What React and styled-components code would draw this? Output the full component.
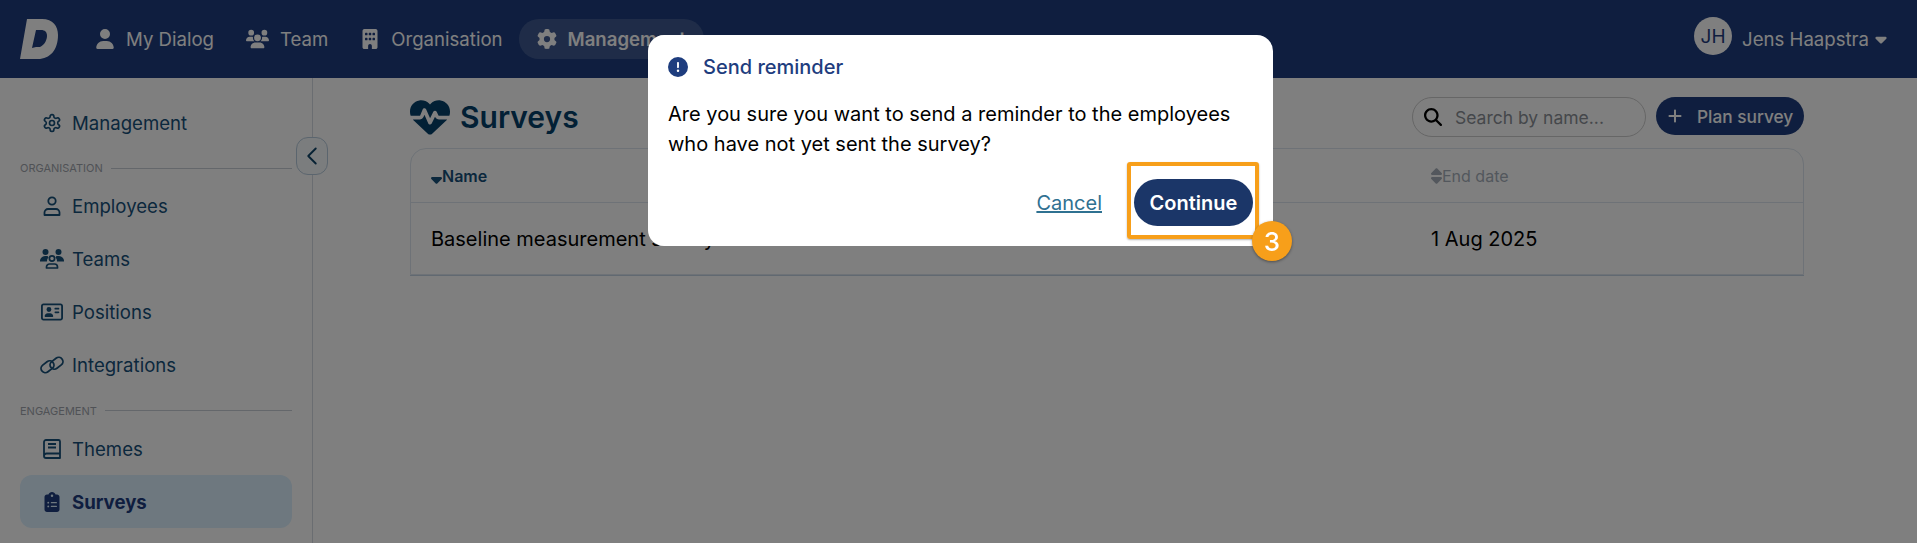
import React from 'react'
import styled, { createGlobalStyle } from 'styled-components'
import {
  FaUser,
  FaUsers,
  FaBuilding,
  FaGear,
  FaRegAddressCard,
  FaClipboardList,
  FaMagnifyingGlass,
  FaCircleExclamation,
  FaCaretDown,
  FaSortDown,
  FaSort,
  FaPlus,
  FaHeartPulse,
} from 'react-icons/fa6'
import { LuSettings, LuChevronLeft } from 'react-icons/lu'

const GlobalStyle = createGlobalStyle`
  html, body {
    margin: 0;
    padding: 0;
    overflow: hidden;
    background: #fff;
    font-family: Inter, "Liberation Sans", sans-serif;
  }
  * {
    box-sizing: border-box;
  }
`

const Page = styled.div`
  height: 100vh;
  display: flex;
  flex-direction: column;
`

const Header = styled.header`
  height: 78px;
  flex: none;
  background: #1e3d7e;
  display: flex;
  align-items: center;
  padding: 0 27px 0 20px;
`

const Logo = styled.svg`
  width: 38px;
  height: 40px;
  margin-right: 21px;
  flex: none;
`

const TopNav = styled.nav`
  display: flex;
  align-items: center;
`

const TopLink = styled.a`
  height: 40px;
  display: flex;
  align-items: center;
  gap: 11px;
  padding: 0 ${(props) => (props.$active ? '18px' : '16px')};
  border-radius: 20px;
  color: #fff;
  font-size: 18.6px;
  font-weight: ${(props) => (props.$active ? 600 : 400)};
  background: ${(props) => (props.$active ? 'rgba(255,255,255,0.15)' : 'none')};
  svg {
    font-size: 20px;
  }
`

const TeamGlyph = styled(FaUsers)`
  width: 23px;
`

const UserBox = styled.div`
  margin-left: auto;
  display: flex;
  align-items: center;
  color: #fff;
  font-size: 18.6px;
`

const Avatar = styled.div`
  width: 38px;
  height: 38px;
  flex: none;
  border-radius: 50%;
  background: #fff;
  color: #1e3d7e;
  font-size: 19px;
  display: flex;
  align-items: center;
  justify-content: center;
  margin: -6px 10px 0 0;
`

const UserCaret = styled(FaCaretDown)`
  font-size: 18px;
  margin-left: 3px;
`

const Body = styled.div`
  flex: 1;
  display: flex;
  min-height: 0;
`

const Sidebar = styled.aside`
  position: relative;
  width: 313px;
  flex: none;
  border-right: 1px solid #d5dbe3;
  padding: 18px 20px 0;
`

const SideItem = styled.a`
  height: 53px;
  display: flex;
  align-items: center;
  gap: 8px;
  padding-left: 20px;
  border-radius: 12px;
  font-size: 18.6px;
  color: ${(props) => (props.$active ? '#1e3d7e' : '#17507a')};
  font-weight: ${(props) => (props.$active ? 700 : 400)};
  background: ${(props) => (props.$active ? '#dcf0ff' : 'none')};
`

const IconSlot = styled.span`
  width: 24px;
  height: 24px;
  flex: none;
  display: flex;
  align-items: center;
  justify-content: center;
  font-size: 20px;
`

const CardGlyph = styled(FaRegAddressCard)`
  width: 22px;
  height: 20px;
`

const SectionLabel = styled.div`
  height: ${(props) => (props.$tall ? '31px' : '30px')};
  padding-top: 8px;
  display: flex;
  align-items: center;
  gap: 8px;
  font-size: 11px;
  color: #a0a5ad;
  &::after {
    content: '';
    flex: 1;
    height: 1px;
    background: #c8ced6;
  }
`

const CollapseButton = styled.button`
  position: absolute;
  top: 59px;
  right: -16px;
  width: 32px;
  height: 38px;
  padding: 0;
  border: 1px solid #b7cbdc;
  border-radius: 12px;
  background: #f7fafc;
  color: #0f4468;
  display: flex;
  align-items: center;
  justify-content: center;
  font-size: 30px;
  svg {
    stroke-width: 1.5;
  }
`

const Main = styled.main`
  flex: 1;
  padding: 19px 113px 0 97px;
`

const TitleRow = styled.div`
  height: 51px;
  display: flex;
  align-items: flex-start;
`

const Title = styled.h1`
  margin: 0;
  display: flex;
  align-items: center;
  gap: 10px;
  font-size: 30px;
  line-height: 40px;
  font-weight: 600;
  color: #05406a;
  svg {
    font-size: 40px;
  }
`

const Search = styled.label`
  margin-left: auto;
  width: 234px;
  height: 40px;
  display: flex;
  align-items: center;
  gap: 13px;
  padding-left: 11px;
  border: 1px solid #ccc;
  border-radius: 20px;
  color: #000;
  font-size: 18px;
`

const SearchInput = styled.input`
  width: 180px;
  border: 0;
  padding: 0;
  outline: 0;
  background: none;
  font: 400 17.5px Inter, sans-serif;
  &::placeholder {
    color: #8a8f96;
    opacity: 1;
  }
`

const PlanButton = styled.button`
  margin-left: 10px;
  width: 148px;
  height: 38px;
  border: 0;
  border-radius: 19px;
  background: #1e3d7e;
  color: #fff;
  display: flex;
  align-items: center;
  gap: 14px;
  padding: 0 0 0 11px;
  font: 500 17.3px Inter, sans-serif;
  svg {
    font-size: 16px;
  }
`

const Table = styled.div`
  border: 1px solid #dce5ee;
  border-radius: 16px 16px 0 0;
  box-shadow: 0 1px 0 #c3d3e3;
`

const Row = styled.div`
  display: grid;
  grid-template-columns: 1000px 1fr;
  align-items: center;
  padding-left: 20px;
  height: ${(props) => (props.$head ? '54px' : '71px')};
  border-bottom: ${(props) => (props.$head ? '1px solid #dce5ee' : '0')};
  font-size: 20px;
  color: #000;
`

const HeadCell = styled.div`
  display: flex;
  align-items: center;
  font-size: 16px;
  font-weight: ${(props) => (props.$sorted ? 600 : 400)};
  color: ${(props) => (props.$sorted ? '#17507a' : '#a6afba')};
  svg {
    width: 11px;
    height: 18px;
  }
`

const Overlay = styled.div`
  position: fixed;
  inset: 0;
  background: rgba(0, 0, 0, 0.5);
  display: flex;
  justify-content: center;
  align-items: flex-start;
  padding: 35px 0 0 4px;
`

const Dialog = styled.div`
  position: relative;
  width: 625px;
  height: 211px;
  background: #fff;
  border-radius: 16px;
  padding: 20px;
`

const DialogTitle = styled.h2`
  margin: 0 0 20px;
  display: flex;
  align-items: center;
  gap: 15px;
  font-size: 20px;
  line-height: 24px;
  font-weight: 500;
  color: #1e3d7e;
  svg {
    font-size: 20px;
  }
`

const DialogText = styled.p`
  margin: 0;
  font-size: 20px;
  line-height: 30px;
  color: #000;
`

const Actions = styled.div`
  display: flex;
  justify-content: flex-end;
  align-items: center;
  gap: 32px;
  margin-top: 20px;
`

const CancelLink = styled.a`
  font-size: 20px;
  color: #2f7191;
  text-decoration: underline;
`

const ContinueButton = styled.button`
  width: 119px;
  height: 47px;
  border: 0;
  border-radius: 24px;
  background: #1b3668;
  color: #fff;
  font: 600 20px Inter, sans-serif;
`

const Highlight = styled.div`
  position: absolute;
  left: 479px;
  top: 127px;
  width: 132px;
  height: 77px;
  border: 4px solid #f79f1a;
  border-radius: 3px;
  box-shadow: 0 1px 2px rgba(0, 0, 0, 0.3);
`

const StepBadge = styled.div`
  position: absolute;
  right: -37px;
  bottom: -26px;
  width: 40px;
  height: 40px;
  border-radius: 50%;
  background: #f79f1a;
  color: #fff;
  box-shadow: 0 1px 3px rgba(0, 0, 0, 0.4);
  display: flex;
  align-items: center;
  justify-content: center;
  font-size: 26px;
  font-weight: 500;
`

const EmployeeIcon = () => (
  <svg width="18" height="20" viewBox="0 0 18 20" fill="none" stroke="currentColor" strokeWidth="1.8">
    <circle cx="9" cy="5" r="3.7" />
    <path d="M1.5 19V16.5A3.5 3.5 0 0 1 5 13H13A3.5 3.5 0 0 1 16.5 16.5V19Z" strokeLinejoin="round" />
  </svg>
)

const TeamIcon = () => (
  <svg width="24" height="20" viewBox="0 0 24 20">
    <g fill="currentColor">
      <circle cx="5.5" cy="3" r="3" />
      <circle cx="18.5" cy="3" r="3" />
      <path d="M0 12.5A5 5 0 0 1 5 7H7.5A4 4 0 0 1 8.5 8.5 5 5 0 0 0 7 12.5Z" />
      <path d="M24 12.5A5 5 0 0 0 19 7H16.5A4 4 0 0 0 15.5 8.5 5 5 0 0 1 17 12.5Z" />
    </g>
    <g fill="none" stroke="currentColor" strokeWidth="1.7">
      <circle cx="12" cy="9.5" r="2.6" />
      <path d="M6.5 19V18A3 3 0 0 1 9.5 15H14.5A3 3 0 0 1 17.5 18V19Z" strokeLinejoin="round" />
    </g>
  </svg>
)

const LinkIcon = () => (
  <svg width="24" height="20" viewBox="0 0 24 20" fill="none" stroke="currentColor" strokeWidth="1.8">
    <rect x="0.5" y="7.5" width="14" height="8.5" rx="4.25" transform="rotate(-38 7.5 11.75)" />
    <rect x="9.5" y="4" width="14" height="8.5" rx="4.25" transform="rotate(-38 16.5 8.25)" />
  </svg>
)

const BookIcon = () => (
  <svg width="18" height="20" viewBox="0 0 18 20" fill="none" stroke="currentColor" strokeWidth="1.8">
    <path d="M1 17.5V3A2 2 0 0 1 3 1H15.5A1.5 1.5 0 0 1 17 2.5V14.5H3.5A2.5 2.5 0 0 0 1 17 2 2 0 0 0 3 19H17V14.5" strokeLinejoin="round" />
    <path d="M5 5H13M5 8.5H13" />
  </svg>
)

const topLinks = [
  { icon: <FaUser />, label: 'My Dialog' },
  { icon: <TeamGlyph />, label: 'Team' },
  { icon: <FaBuilding />, label: 'Organisation' },
  { icon: <FaGear />, label: 'Management', active: true },
]

export default function App() {
  return (
    <>
      <GlobalStyle />
      <Page>
        <Header>
          <Logo viewBox="0 0 38 40">
            <path
              fill="#fff"
              fillRule="evenodd"
              d="M7 0H22C33 0 38 7 38 16C38 31 30 40 18 40H0ZM16 11L12 29L16 28H20C25 26 27 20 27 17C27 13 25 11 21 11Z"
            />
          </Logo>
          <TopNav>
            {topLinks.map((l) => (
              <TopLink key={l.label} $active={l.active}>
                {l.icon}
                {l.label}
              </TopLink>
            ))}
          </TopNav>
          <UserBox>
            <Avatar>JH</Avatar>
            Jens Haapstra
            <UserCaret />
          </UserBox>
        </Header>
        <Body>
          <Sidebar>
            <SideItem>
              <IconSlot>
                <LuSettings />
              </IconSlot>
              Management
            </SideItem>
            <SectionLabel>ORGANISATION</SectionLabel>
            <SideItem>
              <IconSlot>
                <EmployeeIcon />
              </IconSlot>
              Employees
            </SideItem>
            <SideItem>
              <IconSlot>
                <TeamIcon />
              </IconSlot>
              Teams
            </SideItem>
            <SideItem>
              <IconSlot>
                <CardGlyph />
              </IconSlot>
              Positions
            </SideItem>
            <SideItem>
              <IconSlot>
                <LinkIcon />
              </IconSlot>
              Integrations
            </SideItem>
            <SectionLabel $tall>ENGAGEMENT</SectionLabel>
            <SideItem>
              <IconSlot>
                <BookIcon />
              </IconSlot>
              Themes
            </SideItem>
            <SideItem $active>
              <IconSlot>
                <FaClipboardList />
              </IconSlot>
              Surveys
            </SideItem>
            <CollapseButton>
              <LuChevronLeft />
            </CollapseButton>
          </Sidebar>
          <Main>
            <TitleRow>
              <Title>
                <FaHeartPulse />
                Surveys
              </Title>
              <Search>
                <FaMagnifyingGlass />
                <SearchInput placeholder="Search by name..." />
              </Search>
              <PlanButton>
                <FaPlus />
                Plan survey
              </PlanButton>
            </TitleRow>
            <Table>
              <Row $head>
                <HeadCell $sorted>
                  <FaSortDown />
                  Name
                </HeadCell>
                <HeadCell>
                  <FaSort />
                  End date
                </HeadCell>
              </Row>
              <Row>
                <div>Baseline measurement survey</div>
                <div>1 Aug 2025</div>
              </Row>
            </Table>
          </Main>
        </Body>
      </Page>
      <Overlay>
        <Dialog>
          <DialogTitle>
            <FaCircleExclamation />
            Send reminder
          </DialogTitle>
          <DialogText>
            Are you sure you want to send a reminder to the employees
            <br />
            who have not yet sent the survey?
          </DialogText>
          <Actions>
            <CancelLink>Cancel</CancelLink>
            <ContinueButton>Continue</ContinueButton>
          </Actions>
          <Highlight>
            <StepBadge>3</StepBadge>
          </Highlight>
        </Dialog>
      </Overlay>
    </>
  )
}
